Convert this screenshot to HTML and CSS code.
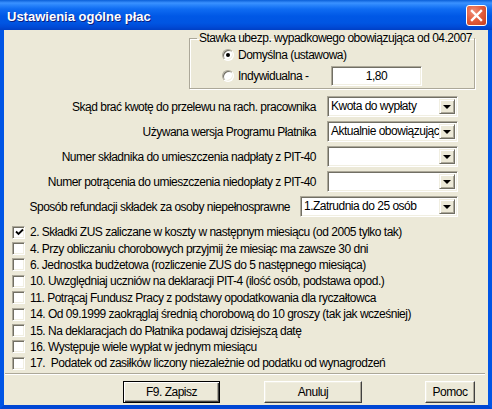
FILE: index.html
```html
<!DOCTYPE html>
<html lang="pl">
<head>
<meta charset="utf-8">
<title>Ustawienia ogólne płac</title>
<link rel="stylesheet" href="styles.css">
</head>
<body>
<div class="window">
  <div class="titlebar">
    <span class="title">Ustawienia ogólne płac</span>
    <span class="close"><svg width="21" height="21" viewBox="0 0 21 21"><path d="M6 6 L15 15 M15 6 L6 15" stroke="#fff" stroke-width="2.4" stroke-linecap="square"/></svg></span>
  </div>
  <div class="client">
    <div class="group-wrap">
      <fieldset class="group">
        <legend>Stawka ubezp. wypadkowego obowiązująca od 04.2007</legend>
        <div class="radios">
          <div class="radio-row"><span class="radio checked"></span><span class="radio-label">Domyślna (ustawowa)</span></div>
          <div class="radio-row tall"><span class="radio"></span><span class="radio-label">Indywidualna -</span><span class="field">1,80</span></div>
        </div>
      </fieldset>
    </div>
    <div class="rows">
      <div class="row"><span class="label">Skąd brać kwotę do przelewu na rach. pracownika</span><div class="combo"><span class="combo-text">Kwota do wypłaty</span><span class="combo-btn"></span></div></div>
      <div class="row"><span class="label">Używana wersja Programu Płatnika</span><div class="combo"><span class="combo-text">Aktualnie obowiązująca</span><span class="combo-btn"></span></div></div>
      <div class="row"><span class="label">Numer składnika do umieszczenia nadpłaty z PIT-40</span><div class="combo"><span class="combo-text"></span><span class="combo-btn"></span></div></div>
      <div class="row"><span class="label">Numer potrącenia do umieszczenia niedopłaty z PIT-40</span><div class="combo"><span class="combo-text"></span><span class="combo-btn"></span></div></div>
      <div class="row"><span class="label">Sposób refundacji składek za osoby niepełnosprawne</span><div class="combo wide"><span class="combo-text">1.Zatrudnia do 25 osób</span><span class="combo-btn"></span></div></div>
    </div>
    <div class="checks">
      <div class="check-row"><span class="checkbox checked"><svg width="9" height="9" viewBox="0 0 9 9"><path d="M1 3.5 L3.5 6 L8 1.5" fill="none" stroke="#000" stroke-width="1.8"/></svg></span><span>2. Składki ZUS zaliczane w koszty w następnym miesiącu (od 2005 tylko tak)</span></div>
      <div class="check-row"><span class="checkbox"></span><span>4. Przy obliczaniu chorobowych przyjmij że miesiąc ma zawsze 30 dni</span></div>
      <div class="check-row"><span class="checkbox"></span><span>6. Jednostka budżetowa (rozliczenie ZUS do 5 następnego miesiąca)</span></div>
      <div class="check-row"><span class="checkbox"></span><span>10. Uwzględniaj uczniów na deklaracji PIT-4 (ilość osób, podstawa opod.)</span></div>
      <div class="check-row"><span class="checkbox"></span><span>11. Potrącaj Fundusz Pracy z podstawy opodatkowania dla ryczałtowca</span></div>
      <div class="check-row"><span class="checkbox"></span><span>14. Od 09.1999 zaokrąglaj średnią chorobową do 10 groszy (tak jak wcześniej)</span></div>
      <div class="check-row"><span class="checkbox"></span><span>15. Na deklaracjach do Płatnika podawaj dzisiejszą datę</span></div>
      <div class="check-row"><span class="checkbox"></span><span>16. Występuje wiele wypłat w jednym miesiącu</span></div>
      <div class="check-row"><span class="checkbox"></span><span>17.&nbsp; Podatek od zasiłków liczony niezależnie od podatku od wynagrodzeń</span></div>
    </div>
    <div class="sep"></div>
    <div class="buttons">
      <span class="btn default">F9. Zapisz</span>
      <span class="btn cancel">Anuluj</span>
      <span class="btn help">Pomoc</span>
    </div>
  </div>
</div>
</body>
</html>
```
FILE: styles.css
```css
* { box-sizing: border-box; }
html, body { margin: 0; padding: 0; background: #fff; }
body {
  font-family: "Liberation Sans", Arial, sans-serif;
  font-size: 12px;
  letter-spacing: -0.5px;
  color: #000;
}
.window { width: 492px; height: 409px; display: flex; flex-direction: column; }
.titlebar {
  height: 30px;
  flex: none;
  display: flex;
  align-items: center;
  padding: 0 5px 0 7px;
  background: linear-gradient(#0a5fd8 0, #3b92ff 3px, #2a85fb 5px, #0f6cf2 9px, #0058e6 16px, #0055e2 23px, #004ad6 27px, #003fc4 30px);
}
.title {
  flex: 1;
  font-family: "Liberation Sans", sans-serif;
  font-weight: bold;
  font-size: 13px;
  letter-spacing: 0;
  color: #fff;
  text-shadow: 1px 1px 0 #0a1e80;
  padding-top: 2px;
}
.close {
  width: 21px; height: 21px;
  border: 1px solid #fff;
  border-radius: 3px;
  background: radial-gradient(circle at 35% 30%, #f0907a 0, #e35f3f 45%, #c63e1e 100%);
  display: flex; align-items: center; justify-content: center;
  margin-top: 1px;
}
.close svg { display: block; margin: -1px; }
.client {
  flex: 1;
  background: #ece9d8;
  border-left: 4px solid #0055e5;
  border-right: 4px solid #0055e5;
  border-bottom: 4px solid #0047d4;
  padding-top: 1px;
  display: flex;
  flex-direction: column;
}
.group-wrap { display: flex; padding-left: 185px; }
.group {
  margin: 0;
  width: 278px;
  height: 58px;
  padding: 0 0 1px 0;
  border: 1px solid #aca899;
  box-shadow: inset 1px 1px 0 #fff, 1px 1px 0 #fff;
}
.group legend {
  padding: 0 2px;
  margin-left: 7px;
  line-height: 15px;
  white-space: nowrap;
}
.radios {
  padding-left: 32px;
  display: flex;
  flex-direction: column;
  gap: 2px;
}
.radio-row { display: flex; align-items: center; height: 18px; gap: 4px; }
.radio-row.tall { height: 20px; }
.radio {
  width: 12px; height: 12px; flex: none;
  border-radius: 50%;
  border: 1px solid;
  border-color: #aca899 #fff #fff #aca899;
  background: #fff;
  box-shadow: inset 1px 1px 0 #716f64, inset -1px -1px 0 #f1efe2;
  position: relative;
}
.radio.checked::after {
  content: "";
  position: absolute;
  left: 3px; top: 3px;
  width: 4px; height: 4px;
  border-radius: 50%;
  background: #000;
}
.radio-label { width: 89px; white-space: nowrap; }
.field {
  width: 91px; height: 20px;
  background: #fff;
  border: 1px solid;
  border-color: #aca899 #fff #fff #aca899;
  box-shadow: inset 1px 1px 0 #716f64, inset -1px -1px 0 #f1efe2;
  display: flex; align-items: center; justify-content: center;
}
.rows {
  display: flex;
  flex-direction: column;
  gap: 4px;
  margin-top: 7px;
  padding-right: 30px;
}
.row { display: flex; justify-content: flex-end; align-items: center; gap: 11px; height: 21px; }
.label { white-space: nowrap; }
.combo {
  width: 131px; height: 21px;
  background: #fff;
  border: 1px solid;
  border-color: #aca899 #fff #fff #aca899;
  box-shadow: inset 1px 1px 0 #716f64, inset -1px -1px 0 #f1efe2;
  display: flex;
  padding: 2px;
}
.combo.wide { width: 158px; }
.row:last-child { gap: 10px; }
.combo-text { flex: 1; overflow: hidden; white-space: nowrap; padding-left: 1px; line-height: 15px; }
.combo-btn {
  width: 16px; flex: none;
  background: #ece9d8;
  border: 1px solid;
  border-color: #f1efe2 #716f64 #716f64 #f1efe2;
  box-shadow: inset 1px 1px 0 #fff, inset -1px -1px 0 #aca899;
  display: flex; align-items: center; justify-content: center;
}
.combo-btn::before {
  content: "";
  width: 0; height: 0;
  border-left: 4px solid transparent;
  border-right: 4px solid transparent;
  border-top: 4px solid #000;
  margin-top: 1px;
}
.checks { margin-top: 7px; padding-left: 8px; display: flex; flex-direction: column; }
.check-row { height: 16.4px; display: flex; align-items: center; gap: 5px; white-space: nowrap; }
.checkbox {
  width: 13px; height: 13px; flex: none;
  background: #fff;
  border: 1px solid;
  border-color: #aca899 #fff #fff #aca899;
  box-shadow: inset 1px 1px 0 #716f64, inset -1px -1px 0 #f1efe2;
  display: flex; align-items: center; justify-content: center;
}
.checkbox svg { display: block; margin: 1px 0 0 1px; }
.sep {
  margin: 1px 3px 0 1px;
  height: 2px;
  border-top: 1px solid #aca899;
  border-bottom: 1px solid #fff;
}
.buttons { display: flex; margin-top: 6px; padding-left: 119px; }
.btn {
  height: 22px;
  display: flex; align-items: center; justify-content: center;
  background: #ece9d8;
  border: 1px solid;
  border-color: #fff #404040 #404040 #fff;
  box-shadow: inset -1px -1px 0 #aca899, inset 1px 1px 0 #f1efe2;
}
.btn.default {
  width: 97px;
  border: 1px solid #000;
  box-shadow: inset 1px 1px 0 #fff, inset -1px -1px 0 #404040, inset -2px -2px 0 #aca899;
}
.btn.cancel { width: 98px; margin-left: 44px; }
.btn.help { width: 50px; margin-left: 63px; }
```
